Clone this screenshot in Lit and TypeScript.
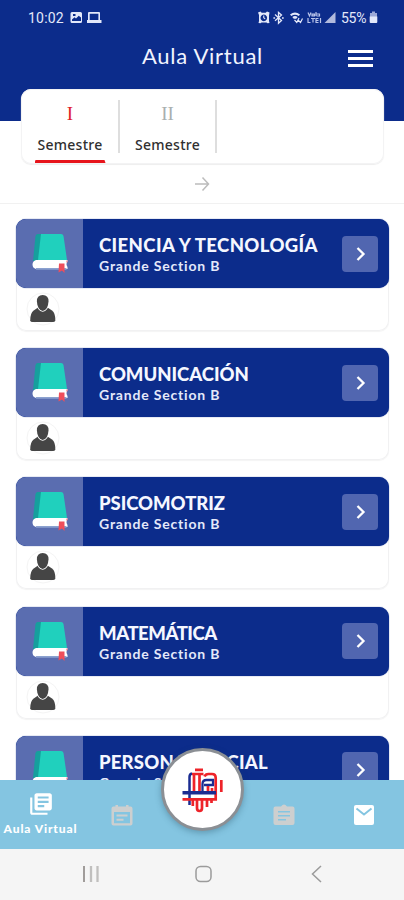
import { LitElement, html, css, svg } from "lit";
import { customElement, property } from "lit/decorators.js";

@customElement("status-bar")
class StatusBar extends LitElement {
  static styles = css`
    :host { display: flex; height: 35px; box-sizing: border-box; padding: 1px 26px 0 28px; align-items: center;
      font: 14px/16px Roboto, sans-serif; color: #e3e8fa; }
    .time { width: 37px; letter-spacing: 0.2px; margin-right: 5px; }
    .pct { letter-spacing: -0.3px; margin-left: 3px; width: 28px; }
    .gap { flex: 1; }
    svg { display: block; flex: none; fill: #e3e8fa; }
  `;
  render() {
    return html`
      <span class="time">10:02</span>
      <svg width="32" height="14" viewBox="0 0 32 14">
        <path fill-rule="evenodd" d="M2 1h8.500q1.500 0 1.500 1.500v8q0 1.500-1.500 1.500h-8.500q-1.500 0-1.500-1.500v-8q0-1.500 1.500-1.500zM2 10h9V6.500L8.700 4.800 6 7.500 4.500 6.300 2 8.500zM3 3v2h2.500V3z"/>
        <path fill-rule="evenodd" d="M19 1h10q1 0 1 1v7h1.500v3h-14.500V9H18V2q0-1 1-1zM19.700 2.700V9h8.700V2.700z"/>
      </svg>
      <span class="gap"></span>
      <svg width="80" height="14" viewBox="2 0 80 14">
        <path fill-rule="evenodd" d="M.5 1.500 3 .5l1.200 1.200h4L9.500.5l2.500 1-.5 3V10l.5 2-2 .2-1-.7H4l-1 .7-2-.2.500-2V4zM6.300 3.600a3.300 3.300 0 1 0 .01 0zM5.700 4.500h1.100v2l1.200 1-.7.8-1.600-1.300z" transform="translate(1.500 0)"/>
        <path d="M19 3.500l6.500 6-3 2.700V1.500l3 2.600-6.500 5.700" fill="none" stroke="#e3e8fa" stroke-width="1.300"/>
        <path d="M17.400 6.200h1.700v1.500h-1.700zM26 6.200h1.700v1.500H26z"/>
        <path d="M34 3.500q5-4 10 0l-1.300 1.600q-3.700-2.800-7.400 0zM36.300 6q2.700-2 5.400 0L40 8q-1-.8-2 0z"/>
        <path d="M38.500 9l2.300 2.500L43 7M42 9l2.500 2.500L46.500 7.500" fill="none" stroke="#e3e8fa" stroke-width="1.200"/>
        <path d="M52 1.500 53.500 5 55 1.500M56 3.200h2.500v1.600H56zM60 1v4M60.500 3h3v2h-3M52 7v4.500h2.500M55 7.500h4M57 7.500v4M62.500 7.500H60v4h2.500M60 9.500h2.500M64.500 7v5" fill="none" stroke="#b9c4ea" stroke-width="1.200"/>
        <path d="M79.500 1v11h-11z" fill="#b1badd"/>
      </svg>
      <span class="pct">55%</span>
      <svg width="9" height="14" viewBox="0 0 9 14"><path d="M3 .5h3v1.500H8v4H1V2h2z" fill="#9ba8d7"/><path d="M.7 5.500h7.600V11q0 1-1 1H1.700q-1 0-1-1z"/></svg>
    `;
  }
}

@customElement("course-card")
class CourseCard extends LitElement {
  @property() name = "";
  @property({ type: Number }) spacing = 0;
  static styles = css`
    :host { display: block; height: 112px; box-sizing: border-box; background: #fff; border-radius: 10px;
      box-shadow: inset 0 0 0 1px #f1f1f2, 0 1px 1px #f4f4f4; flex: none; }
    .head { height: 69px; display: flex; align-items: center; background: #0c2c8b; border-radius: 10px; overflow: hidden;
      padding-right: 11px; box-shadow: 0 0 1px #0c2c8b; }
    .thumb { width: 67px; height: 69px; background: #5a6db0; flex: none; margin-right: 16px; }
    .text { flex: 1; white-space: nowrap; color: #f5f7ff; padding-top: 3px; }
    .name { font: 900 18.500px/22px Lato, sans-serif; }
    .sub { font: 700 14px/20px Lato, sans-serif; color: #e4e9fa; letter-spacing: .82px; }
    .go { width: 36px; height: 36px; border-radius: 4px; background: #5166b0; display: block; flex: none; }
    .person { display: block; margin: 3px 0 0 10px; }
  `;
  render() {
    return html`
      <div class="head">
        <svg class="thumb" viewBox="0 0 67 69">
          <path d="M22 15q-2 0-2.500 2L17 42h8V15z" fill="#169f9d"/>
          <path d="M25 15h20q2 0 2.500 2L51 41H22z" fill="#20d0bd"/>
          <path d="M20 41h31.500v1.500q-2 2.500 0 5.500v2H20q-3.500-1-3.500-4.500T20 41z" fill="#fff"/>
          <path d="M20 49h30.500v1.700H20z" fill="#8ba1cf"/>
          <path d="M50.500 41.500h1v2h-1z" fill="#f3636a"/>
          <path d="M43 44.500h5.500V54L46 51.500 42.500 53.500z" fill="#ef4e5b"/>
        </svg>
        <div class="text">
          <div class="name" style="letter-spacing:${this.spacing}px">${this.name}</div>
          <div class="sub">Grande Section B</div>
        </div>
        <svg class="go" viewBox="0 0 36 36"><path d="M15.500 12l6 6-6 6" fill="none" stroke="#fff" stroke-width="2.300"/></svg>
      </div>
      <svg class="person" width="34" height="36" viewBox="0 0 34 36">
        <circle cx="17" cy="18" r="16" fill="#fff" stroke="#f4f4f4"/>
        <path d="M4.200 29.500q0-7.500 3.500-10L12 16.500h9.500l4.500 3q3.500 2.500 3.300 10-.4 1.500-2.300 1.500H6.500q-2 0-2.300-1.500z" fill="#454545"/>
        <path d="M16.700 4q6 0 5.800 6.500-.5 8.500-5.800 9.500-5.300-1-5.800-9.500Q10.700 4 16.700 4z" fill="#454545" stroke="#fff" stroke-width="1.600" paint-order="stroke"/>
      </svg>
    `;
  }
}

const courses: [string, number][] = [
  ["CIENCIA Y TECNOLOGÍA", 0.4],
  ["COMUNICACIÓN", -0.02],
  ["PSICOMOTRIZ", -0.05],
  ["MATEMÁTICA", -0.45],
  ["PERSONAL SOCIAL", 0.2],
];

const crest = svg`
  <g fill="none" stroke-width="2.500">
    <path d="M28.500 57V29q0-3 2.500-3.500" stroke="#1a2c91"/>
    <path d="M41.500 44V36q0-4 4-4H52v5H43" stroke="#1a2c91" stroke-width="2.300"/>
    <path d="M34 21.800h8M31 26h11.500M33 26v19M38.500 26v19M47 45v-7M51 45v-5M43.500 28.500q1-2.500 4-2.500H51q3.700 0 3.700 4V51.300H21.500M60.300 32v12" stroke="#ee2329" stroke-width="2.700"/>
    <path d="M31.800 51v7M36 51v9q0 3 2.500 3t2.500-3v-9M46 51v8M50.500 51v4" stroke="#ee2329" stroke-width="2.700"/>
    <path d="M21.500 44.800H55" stroke="#1a2c91" stroke-width="3.400"/>
  </g>`;

@customElement("app-root")
class AppRoot extends LitElement {
  static styles = css`
    :host { display: flex; flex-direction: column; width: 404px; height: 900px; overflow: hidden; background: #fff;
      font-family: Lato, sans-serif; }
    .top { height: 121px; background: #0c2c8b; flex: none; }
    .bar { height: 54px; display: flex; align-items: flex-start; justify-content: space-between; padding: 8px 31px 0 142px; box-sizing: border-box; }
    h1 { margin: 0; font: 400 22px/26px Lato, sans-serif; color: #f1f4ff; letter-spacing: .72px; white-space: nowrap; }
    .menu { display: flex; flex-direction: column; gap: 4px; padding-top: 7px; }
    .menu i { width: 25px; height: 3px; background: #fff; }
    .tabs { margin: -32px 20px 0 21px; height: 75px; flex: none; background: #fff; border-radius: 10px; display: flex;
      box-shadow: inset 0 0 0 1px #f3f3f4, 0 1px 1px #eee; }
    .tab { width: 97px; box-sizing: border-box; display: flex; flex-direction: column; align-items: center; position: relative; }
    .tab.on { width: 98px; }
    .tab::after { content: ""; position: absolute; right: -1px; top: 11px; width: 2px; height: 53px; background: #dedede; }
    .num { font: 19px/22px "Liberation Serif", serif; margin-top: 14px; color: #a9afaf; }
    .on .num { color: #df202a; }
    .lbl { font: 500 14px/18px "Noto Sans", sans-serif; color: #303030; margin-top: 11px; letter-spacing: .25px; }
    .line { height: 3px; width: 71px; margin-top: 6px; }
    .on .line { background: #e7141b; clip-path: polygon(1px 0, 70px 0, 71px 100%, 0 100%); }
    .more { height: 40px; border-bottom: 1px solid #f1f1f1; flex: none; display: flex; align-items: center; justify-content: center; box-sizing: border-box; }
    .list { flex: 1; min-height: 0; overflow: hidden; padding: 15.300px 15px 0 16px; display: flex; flex-direction: column; gap: 17.100px; }
    .nav { height: 69px; flex: none; background: #84c5e1; display: grid; grid-template-columns: repeat(5, 81px); position: relative; }
    .item { display: flex; flex-direction: column; align-items: center; justify-content: center; color: #fff; }
    .first { justify-content: flex-start; padding-top: 11px; }
    .cap { font: 900 12px/15px Lato, sans-serif; letter-spacing: .88px; white-space: nowrap; margin-top: 4px; }
    .fab { position: absolute; left: 161px; top: -32px; width: 83px; height: 83px; box-sizing: border-box; border: 3px solid #8b8f94;
      border-radius: 50%; background: #fff; box-shadow: 0 2px 6px rgba(30, 70, 90, .35); }
    .fab svg { display: block; margin: -3px; }
    .sys { height: 51px; flex: none; background: #f5f5f5; }
    .sys svg { display: block; }
  `;
  render() {
    return html`
      <div class="top">
        <status-bar></status-bar>
        <div class="bar"><h1>Aula Virtual</h1><div class="menu"><i></i><i></i><i></i></div></div>
      </div>
      <div class="tabs">
        <div class="tab on"><span class="num">I</span><span class="lbl">Semestre</span><span class="line"></span></div>
        <div class="tab"><span class="num">II</span><span class="lbl">Semestre</span></div>
      </div>
      <div class="more">
        <svg width="16" height="16" viewBox="0 0 16 16" fill="none" stroke="#bcbcbc" stroke-width="1.500"><path d="M1 8h13.500M8.500 1.500 14.500 8l-6 6.500"/></svg>
      </div>
      <div class="list">
        ${courses.map(([n, s]) => html`<course-card .name=${n} .spacing=${s}></course-card>`)}
      </div>
      <div class="nav">
        <div class="item first">
          <svg width="26" height="26" viewBox="0 0 24 24" fill="#fff"><path d="M4 6H2v14c0 1.100.9 2 2 2h14v-2H4V6zm16-4H8c-1.100 0-2 .9-2 2v12c0 1.100.9 2 2 2h12c1.100 0 2-.9 2-2V4c0-1.100-.9-2-2-2zm-1 9H9V9h10v2zm-4 4H9v-2h6v2zm4-8H9V5h10v2z"/></svg>
          <span class="cap">Aula Virtual</span>
        </div>
        <div class="item">
          <svg width="26" height="26" viewBox="0 0 26 26" fill="#cdcfcf" fill-rule="evenodd"><path d="M4.500 4.500h2V3h2.500v1.500h8V3h2.500v1.500h2q2 0 2 2v15q0 2-2 2h-17q-2 0-2-2v-15q0-2 2-2zM5 10v11.300h16V10z"/><path d="M7.500 12.500h11v2h-11zM7.500 16.700h7v2h-7z"/></svg>
        </div>
        <div class="item"></div>
        <div class="item">
          <svg width="26" height="26" viewBox="0 0 26 26" fill="#cdcfcf" fill-rule="evenodd"><path d="M4.500 4.500H10q3-4 6 0h5.500q2 0 2 2V21q0 2-2 2h-17q-2 0-2-2V6.500q0-2 2-2zM7 9v1.500h12V9zM7 13v1.500h12V13zM7 17v1.500h8V17z"/></svg>
        </div>
        <div class="item">
          <svg width="22" height="22" viewBox="1 0 22 22"><rect x="1" y="1" width="20" height="20" rx="2" fill="#fff"/><path d="M3.500 4.500 11 10.500l7.500-6" fill="none" stroke="#84c5e1" stroke-width="2"/></svg>
        </div>
        <div class="fab"><svg width="83" height="83" viewBox="0 0 83 83">${crest}</svg></div>
      </div>
      <div class="sys">
        <svg width="404" height="51" viewBox="0 0 404 51" fill="none" stroke="#9b9b9b" stroke-width="1.500">
          <path d="M84 17v16" stroke="#a09c9a" stroke-width="2"/>
          <path d="M91 17v16M97.500 17v16" stroke="#c0bfbe" stroke-width="2.300"/>
          <rect x="196" y="17.500" width="15" height="15" rx="4.500"/>
          <path d="M321 17l-8.500 8 8.500 8"/>
        </svg>
      </div>
    `;
  }
}
